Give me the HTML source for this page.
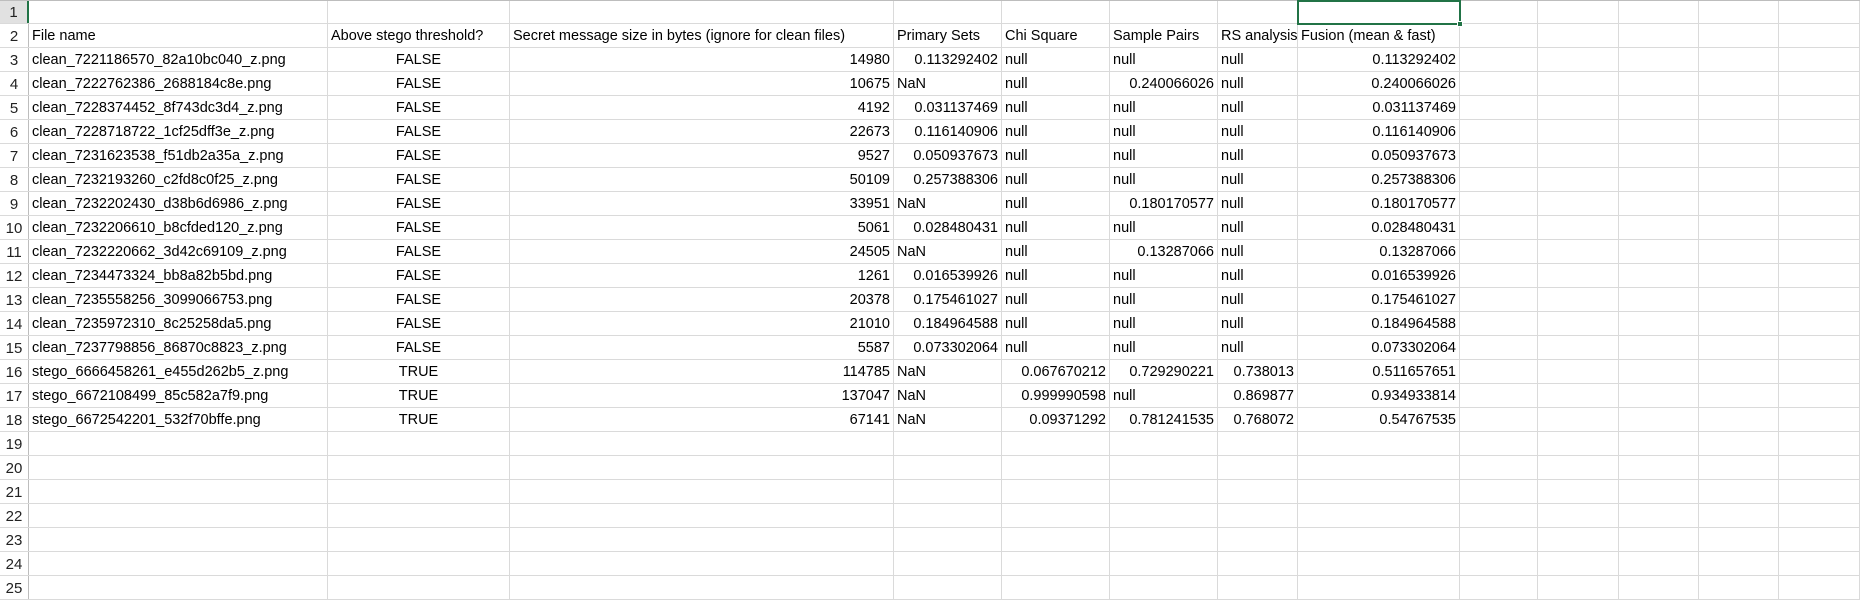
<!DOCTYPE html>
<html><head><meta charset="utf-8"><style>
*{margin:0;padding:0;box-sizing:border-box}
body{width:1860px;height:595px;overflow:hidden;background:#fff;font-family:"Liberation Sans",Arial,sans-serif;font-size:14.5px;color:#000;position:relative}
.row{display:flex;height:24px;border-bottom:1px solid #dadada}
.row>div{height:23px;line-height:25px;border-right:1px solid #dadada;white-space:nowrap;overflow:hidden;padding:0 3px;flex:none}
.row>div:nth-child(1){width:29px;text-align:center;color:#222;border-right:1px solid #bdbdbd;padding:0;font-size:15px}
.row>div:nth-child(2){width:299px}
.row>div:nth-child(3){width:182px;text-align:center}
.row>div:nth-child(4){width:384px;text-align:right}
.row>div:nth-child(5){width:108px}
.row>div:nth-child(6){width:108px}
.row>div:nth-child(7){width:108px}
.row>div:nth-child(8){width:80px}
.row>div:nth-child(9){width:162px;text-align:right}
.row>div:nth-child(10){width:78px}
.row>div:nth-child(11){width:81px}
.row>div:nth-child(12){width:80px}
.row>div:nth-child(13){width:80px}
.row>div:nth-child(14){width:81px}
.row>div.r{text-align:right}
.h>div:nth-child(3),.h>div:nth-child(4){text-align:left}
.h>div:nth-child(9){text-align:left}
#top{position:absolute;left:0;top:0;width:1860px;height:1px;background:#bdbdbd}
#r1{background:#e1e1e1 !important;border-right:2px solid #217346 !important}
#sel{position:absolute;left:1297px;top:0;width:164px;height:25px;border:2px solid #217346}
#hd{position:absolute;left:1457px;top:21px;width:6px;height:6px;background:#217346;border:1px solid #fff}
</style></head><body>
<div class="row"><div id="r1">1</div><div></div><div></div><div></div><div></div><div></div><div></div><div></div><div></div><div></div><div></div><div></div><div></div><div></div></div>
<div class="row h"><div>2</div><div>File name</div><div>Above stego threshold?</div><div>Secret message size in bytes (ignore for clean files)</div><div>Primary Sets</div><div>Chi Square</div><div>Sample Pairs</div><div>RS analysis</div><div>Fusion (mean &amp; fast)</div><div></div><div></div><div></div><div></div><div></div></div>
<div class="row"><div>3</div><div>clean_7221186570_82a10bc040_z.png</div><div>FALSE</div><div>14980</div><div class="r">0.113292402</div><div>null</div><div>null</div><div>null</div><div>0.113292402</div><div></div><div></div><div></div><div></div><div></div></div>
<div class="row"><div>4</div><div>clean_7222762386_2688184c8e.png</div><div>FALSE</div><div>10675</div><div>NaN</div><div>null</div><div class="r">0.240066026</div><div>null</div><div>0.240066026</div><div></div><div></div><div></div><div></div><div></div></div>
<div class="row"><div>5</div><div>clean_7228374452_8f743dc3d4_z.png</div><div>FALSE</div><div>4192</div><div class="r">0.031137469</div><div>null</div><div>null</div><div>null</div><div>0.031137469</div><div></div><div></div><div></div><div></div><div></div></div>
<div class="row"><div>6</div><div>clean_7228718722_1cf25dff3e_z.png</div><div>FALSE</div><div>22673</div><div class="r">0.116140906</div><div>null</div><div>null</div><div>null</div><div>0.116140906</div><div></div><div></div><div></div><div></div><div></div></div>
<div class="row"><div>7</div><div>clean_7231623538_f51db2a35a_z.png</div><div>FALSE</div><div>9527</div><div class="r">0.050937673</div><div>null</div><div>null</div><div>null</div><div>0.050937673</div><div></div><div></div><div></div><div></div><div></div></div>
<div class="row"><div>8</div><div>clean_7232193260_c2fd8c0f25_z.png</div><div>FALSE</div><div>50109</div><div class="r">0.257388306</div><div>null</div><div>null</div><div>null</div><div>0.257388306</div><div></div><div></div><div></div><div></div><div></div></div>
<div class="row"><div>9</div><div>clean_7232202430_d38b6d6986_z.png</div><div>FALSE</div><div>33951</div><div>NaN</div><div>null</div><div class="r">0.180170577</div><div>null</div><div>0.180170577</div><div></div><div></div><div></div><div></div><div></div></div>
<div class="row"><div>10</div><div>clean_7232206610_b8cfded120_z.png</div><div>FALSE</div><div>5061</div><div class="r">0.028480431</div><div>null</div><div>null</div><div>null</div><div>0.028480431</div><div></div><div></div><div></div><div></div><div></div></div>
<div class="row"><div>11</div><div>clean_7232220662_3d42c69109_z.png</div><div>FALSE</div><div>24505</div><div>NaN</div><div>null</div><div class="r">0.13287066</div><div>null</div><div>0.13287066</div><div></div><div></div><div></div><div></div><div></div></div>
<div class="row"><div>12</div><div>clean_7234473324_bb8a82b5bd.png</div><div>FALSE</div><div>1261</div><div class="r">0.016539926</div><div>null</div><div>null</div><div>null</div><div>0.016539926</div><div></div><div></div><div></div><div></div><div></div></div>
<div class="row"><div>13</div><div>clean_7235558256_3099066753.png</div><div>FALSE</div><div>20378</div><div class="r">0.175461027</div><div>null</div><div>null</div><div>null</div><div>0.175461027</div><div></div><div></div><div></div><div></div><div></div></div>
<div class="row"><div>14</div><div>clean_7235972310_8c25258da5.png</div><div>FALSE</div><div>21010</div><div class="r">0.184964588</div><div>null</div><div>null</div><div>null</div><div>0.184964588</div><div></div><div></div><div></div><div></div><div></div></div>
<div class="row"><div>15</div><div>clean_7237798856_86870c8823_z.png</div><div>FALSE</div><div>5587</div><div class="r">0.073302064</div><div>null</div><div>null</div><div>null</div><div>0.073302064</div><div></div><div></div><div></div><div></div><div></div></div>
<div class="row"><div>16</div><div>stego_6666458261_e455d262b5_z.png</div><div>TRUE</div><div>114785</div><div>NaN</div><div class="r">0.067670212</div><div class="r">0.729290221</div><div class="r">0.738013</div><div>0.511657651</div><div></div><div></div><div></div><div></div><div></div></div>
<div class="row"><div>17</div><div>stego_6672108499_85c582a7f9.png</div><div>TRUE</div><div>137047</div><div>NaN</div><div class="r">0.999990598</div><div>null</div><div class="r">0.869877</div><div>0.934933814</div><div></div><div></div><div></div><div></div><div></div></div>
<div class="row"><div>18</div><div>stego_6672542201_532f70bffe.png</div><div>TRUE</div><div>67141</div><div>NaN</div><div class="r">0.09371292</div><div class="r">0.781241535</div><div class="r">0.768072</div><div>0.54767535</div><div></div><div></div><div></div><div></div><div></div></div>
<div class="row"><div>19</div><div></div><div></div><div></div><div></div><div></div><div></div><div></div><div></div><div></div><div></div><div></div><div></div><div></div></div>
<div class="row"><div>20</div><div></div><div></div><div></div><div></div><div></div><div></div><div></div><div></div><div></div><div></div><div></div><div></div><div></div></div>
<div class="row"><div>21</div><div></div><div></div><div></div><div></div><div></div><div></div><div></div><div></div><div></div><div></div><div></div><div></div><div></div></div>
<div class="row"><div>22</div><div></div><div></div><div></div><div></div><div></div><div></div><div></div><div></div><div></div><div></div><div></div><div></div><div></div></div>
<div class="row"><div>23</div><div></div><div></div><div></div><div></div><div></div><div></div><div></div><div></div><div></div><div></div><div></div><div></div><div></div></div>
<div class="row"><div>24</div><div></div><div></div><div></div><div></div><div></div><div></div><div></div><div></div><div></div><div></div><div></div><div></div><div></div></div>
<div class="row"><div>25</div><div></div><div></div><div></div><div></div><div></div><div></div><div></div><div></div><div></div><div></div><div></div><div></div><div></div></div>
<div id="top"></div>
<div id="sel"></div><div id="hd"></div>
</body></html>
